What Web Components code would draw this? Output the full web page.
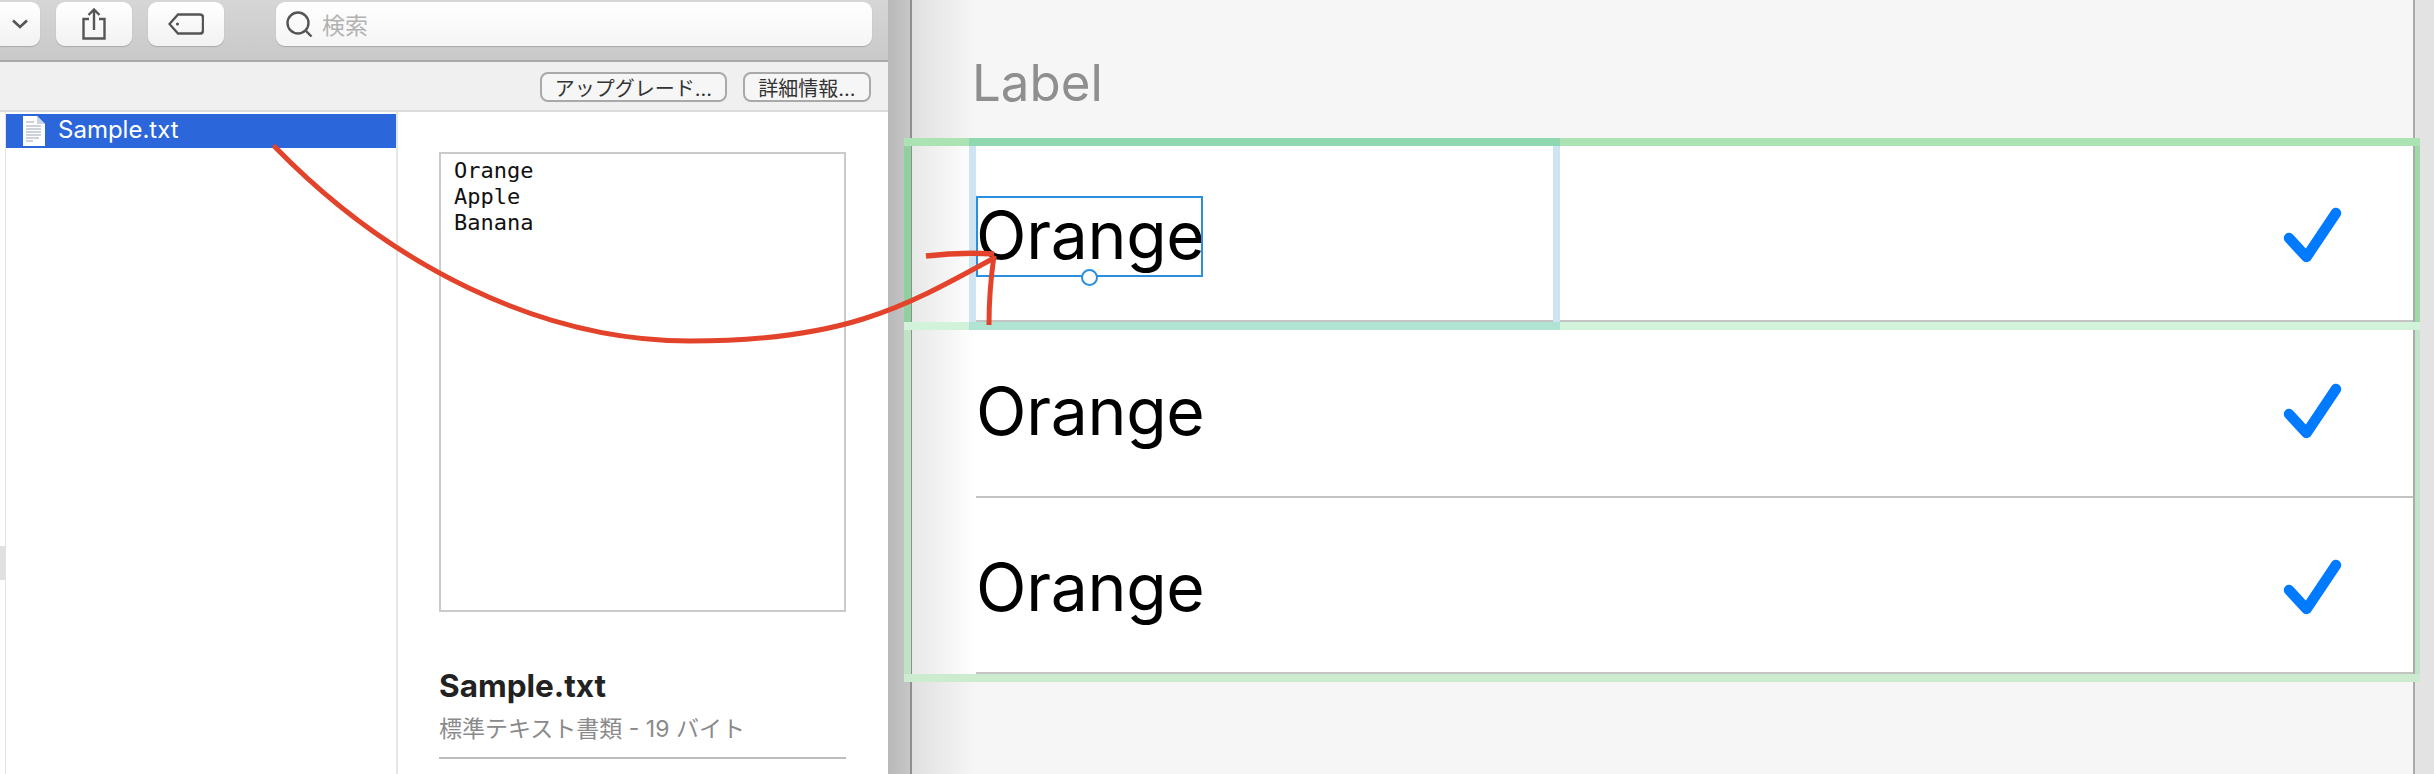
<!DOCTYPE html>
<html>
<head>
<meta charset="utf-8">
<title>Sample</title>
<style>
  html, body { margin: 0; height: 100%; }
  body {
    position: relative;
    width: 2434px;
    height: 774px;
    overflow: hidden;
    display: flex;
    background: #f6f6f6;
    font-family: Inter, "Noto Sans CJK JP", sans-serif;
  }
</style>
</head>
<body>
  <finder-pane></finder-pane>
  <editor-pane>
    <table-row selected>Orange</table-row>
    <table-row>Orange</table-row>
    <table-row>Orange</table-row>
  </editor-pane>
  <guide-overlay></guide-overlay>

<script>
  const SANS = 'Inter, "Noto Sans CJK JP", sans-serif';

  class ToolButton extends HTMLElement {
    constructor() {
      super();
      const shadow = this.attachShadow({ mode: 'open' });
      shadow.innerHTML = `
        <style>
          :host {
            display: flex;
            align-items: center;
            justify-content: center;
            height: 44px;
            box-sizing: border-box;
            background: linear-gradient(#ffffff, #f2f2f2);
            border-radius: 9px;
            box-shadow: 0 1px 1px #a8a8a8;
          }
        </style>
        <slot></slot>
      `;
    }
  }
  customElements.define('tool-button', ToolButton);

  class PlainButton extends HTMLElement {
    constructor() {
      super();
      const shadow = this.attachShadow({ mode: 'open' });
      shadow.innerHTML = `
        <style>
          :host {
            display: flex;
            align-items: center;
            justify-content: center;
            height: 30px;
            box-sizing: border-box;
            border: 2px solid #a9a9a9;
            border-radius: 8px;
            background: #f6f6f6;
            color: #333;
            font: 20px ${SANS};
            white-space: nowrap;
          }
        </style>
        <slot></slot>
      `;
    }
  }
  customElements.define('plain-button', PlainButton);

  class FinderPane extends HTMLElement {
    constructor() {
      super();
      const shadow = this.attachShadow({ mode: 'open' });
      shadow.innerHTML = `
        <style>
          :host {
            display: flex;
            flex-direction: column;
            flex: none;
            width: 888px;
            height: 774px;
            background: #fff;
            font-family: ${SANS};
          }
          svg { display: block; fill: none; stroke: #555; stroke-width: 2.4; }
          .toolbar {
            display: flex;
            align-items: flex-start;
            box-sizing: border-box;
            height: 62px;
            padding: 2px 16px 0 0;
            background: linear-gradient(#d6d6d6, #c9c9c9);
            border-bottom: 2px solid #a9a9a9;
          }
          .toolbar tool-button { margin-right: 16px; }
          .chevron { width: 40px; border-radius: 0 9px 9px 0; }
          .icon { width: 76px; }
          .search {
            flex: 1;
            display: flex;
            align-items: center;
            gap: 9px;
            margin: 0 0 0 36px;
            padding-left: 10px;
            height: 44px;
            box-sizing: border-box;
            background: linear-gradient(#ffffff, #f5f5f5);
            border-radius: 9px;
            box-shadow: 0 1px 1px #a8a8a8;
            color: #b2b2b2;
            font-size: 23px;
          }
          .subbar {
            display: flex;
            justify-content: flex-end;
            gap: 16px;
            box-sizing: border-box;
            height: 50px;
            padding: 10px 17px 0 0;
            background: #f0f0f0;
            border-bottom: 2px solid #dcdcdc;
          }
          .upgrade { width: 187px; }
          .detail { width: 128px; }
          .content { flex: 1; display: flex; min-height: 0; }
          .edge {
            flex: none;
            width: 5px;
            border-right: 1px solid #e2e2e2;
          }
          .edge div { margin-top: 434px; height: 34px; background: #e0e0e0; }
          .list {
            flex: none;
            width: 390px;
            padding-top: 2px;
            border-right: 2px solid #e6e6e6;
          }
          .file {
            display: flex;
            align-items: center;
            gap: 13px;
            height: 34px;
            padding-left: 17px;
            background: #2b66da;
            color: #fff;
            font-size: 24px;
          }
          .file span { margin-top: -3px; }
          .file svg { stroke: none; }
          .preview {
            flex: 1;
            box-sizing: border-box;
            padding: 40px 42px 0 41px;
          }
          .box {
            box-sizing: border-box;
            height: 460px;
            padding: 4px 13px;
            border: 2px solid #cacaca;
            font: 22px/26px "DejaVu Sans Mono", monospace;
            color: #111;
            white-space: pre;
          }
          .name {
            margin-top: 56px;
            font-size: 31.5px;
            line-height: 36px;
            font-weight: 700;
            color: #222;
          }
          .kind {
            margin-top: 11px;
            font-size: 23px;
            line-height: 28px;
            color: #8a8a8a;
            padding-bottom: 14px;
            border-bottom: 2px solid #bdbdbd;
          }
        </style>
        <div class="toolbar">
          <tool-button class="chevron">
            <svg width="16" height="10" viewBox="0 0 16 10"><path d="M1 1.5 L8 8 L15 1.5" stroke-width="2.6"/></svg>
          </tool-button>
          <tool-button class="icon">
            <svg width="24" height="32" viewBox="0 0 24 32"><path d="M7 11 H1.5 V30.5 H22.5 V11 H17 M12 22 V2 M6.5 7 L12 1.5 L17.5 7"/></svg>
          </tool-button>
          <tool-button class="icon">
            <svg width="36" height="22" viewBox="0 0 36 22"><path d="M10 1.5 H32 Q35 1.5 35 4.5 V17.5 Q35 20.5 32 20.5 H10 L1.5 11 Z"/><circle cx="9.5" cy="11" r="1.6" fill="#555" stroke="none"/></svg>
          </tool-button>
          <div class="search">
            <svg width="27" height="26" viewBox="0 0 27 26"><circle cx="12" cy="12" r="10.5"/><path d="M19.5 19.5 L25.5 25.5"/></svg>
            <span>検索</span>
          </div>
        </div>
        <div class="subbar">
          <plain-button class="upgrade">アップグレード...</plain-button>
          <plain-button class="detail">詳細情報...</plain-button>
        </div>
        <div class="content">
          <div class="edge"><div></div></div>
          <div class="list">
            <div class="file">
              <svg width="22" height="30" viewBox="0 0 22 30">
                <path d="M0 0 H14 L22 8 V30 H0 Z" fill="#fff"/>
                <path d="M14 0 L22 8 H14 Z" fill="#c9d3ea"/>
                <path d="M3 6 H11 M3 10 H18 M3 13 H18 M3 16 H18 M3 19 H18 M3 22 H16 M3 25 H10" fill="none" style="stroke:#9aa3b5;stroke-width:1"/>
              </svg>
              <span>Sample.txt</span>
            </div>
          </div>
          <div class="preview">
            <div class="box">Orange
Apple
Banana</div>
            <div class="name">Sample.txt</div>
            <div class="kind">標準テキスト書類 - 19 バイト</div>
          </div>
        </div>
      `;
    }
  }
  customElements.define('finder-pane', FinderPane);

  class EditorPane extends HTMLElement {
    constructor() {
      super();
      const shadow = this.attachShadow({ mode: 'open' });
      shadow.innerHTML = `
        <style>
          :host {
            display: flex;
            flex: 1;
            height: 774px;
            font-family: ${SANS};
          }
          .gutter {
            flex: none;
            width: 22px;
            background: linear-gradient(90deg, #b9b9b9, #c6c6c6);
            border-right: 2px solid #8f8f8f;
          }
          .main {
            flex: 1;
            position: relative;
            background: #f6f6f6;
            border-right: 2px solid #ababab;
          }
          .main::after {
            content: "";
            position: absolute;
            top: 0;
            bottom: 0;
            left: 0;
            width: 64px;
            background: linear-gradient(90deg, rgba(0,0,0,.09), rgba(0,0,0,0));
          }
          .title {
            box-sizing: border-box;
            height: 146px;
            padding: 52px 0 0 60px;
            font-size: 51px;
            line-height: 62px;
            color: #8f8f8f;
          }
          .strip { flex: none; width: 19px; background: #e3e3e3; }
        </style>
        <div class="gutter"></div>
        <div class="main">
          <div class="title">Label</div>
          <slot></slot>
        </div>
        <div class="strip"></div>
      `;
    }
  }
  customElements.define('editor-pane', EditorPane);

  class TableRow extends HTMLElement {
    constructor() {
      super();
      const shadow = this.attachShadow({ mode: 'open' });
      shadow.innerHTML = `
        <style>
          :host {
            display: block;
            background: #fff;
            padding-left: 64px;
          }
          .inner {
            display: flex;
            align-items: center;
            justify-content: space-between;
            box-sizing: border-box;
            height: 176px;
            padding: 6px 71px 0 0;
            border-bottom: 2px solid #c4c4c4;
          }
          .text {
            position: relative;
            box-sizing: border-box;
            width: 227px;
            height: 81px;
            font-size: 66px;
            line-height: 79px;
            letter-spacing: -0.3px;
            color: #000;
          }
          :host([selected]) .text { outline: 2px solid #2a8fdc; outline-offset: -2px; }
          .handle { display: none; }
          :host([selected]) .handle {
            display: block;
            position: absolute;
            left: 105px;
            bottom: -9px;
            width: 17px;
            height: 17px;
            box-sizing: border-box;
            border: 2px solid #2a8fdc;
            border-radius: 50%;
            background: #fff;
          }
          svg { display: block; margin-top: 2px; }
        </style>
        <div class="inner">
          <div class="text"><slot></slot><div class="handle"></div></div>
          <svg width="64" height="64" viewBox="0 0 64 64">
            <path d="M11 33 L28.5 52 L58 8" fill="none" stroke="#007aff" stroke-width="10.5" stroke-linecap="round" stroke-linejoin="round"/>
          </svg>
        </div>
      `;
    }
  }
  customElements.define('table-row', TableRow);

  // green and blue guides plus the red arrow drawn over the screenshot
  class GuideOverlay extends HTMLElement {
    constructor() {
      super();
      const shadow = this.attachShadow({ mode: 'open' });
      shadow.innerHTML = `
        <style>
          :host { position: absolute; top: 0; left: 0; width: 2434px; height: 774px; pointer-events: none; }
          svg { display: block; }
        </style>
        <svg width="2434" height="774" viewBox="0 0 2434 774">
          <rect x="904" y="138" width="1516" height="8" fill="#abe3b4"/>
          <rect x="904" y="146" width="7" height="176" fill="#8ed09e"/>
          <rect x="2415" y="146" width="5" height="176" fill="#9ed9a9"/>
          <rect x="904" y="322" width="1516" height="8" fill="#d2f3da"/>
          <rect x="904" y="330" width="7" height="352" fill="#bfe3c5"/>
          <rect x="2415" y="330" width="5" height="352" fill="#c0e4c8"/>
          <rect x="904" y="674" width="1516" height="8" fill="#cdeccf"/>
          <rect x="969" y="146" width="7" height="176" fill="#cfe4f2"/>
          <rect x="1553" y="146" width="7" height="176" fill="#cfe4f2"/>
          <rect x="969" y="138" width="591" height="8" fill="#8fd8b0"/>
          <rect x="969" y="322" width="591" height="8" fill="#b0e4d2"/>
          <g fill="none" stroke="#e2432a" stroke-linecap="round">
            <path d="M275 147 C390 265 540 341 690 341 S900 310 994 258" stroke-width="5"/>
            <path d="M926 256 Q960 252 994 254" stroke-width="5.5" stroke-linecap="butt"/>
            <path d="M994 256 Q989 290 989 325" stroke-width="5" stroke-linecap="butt"/>
          </g>
        </svg>
      `;
    }
  }
  customElements.define('guide-overlay', GuideOverlay);
</script>
</body>
</html>
